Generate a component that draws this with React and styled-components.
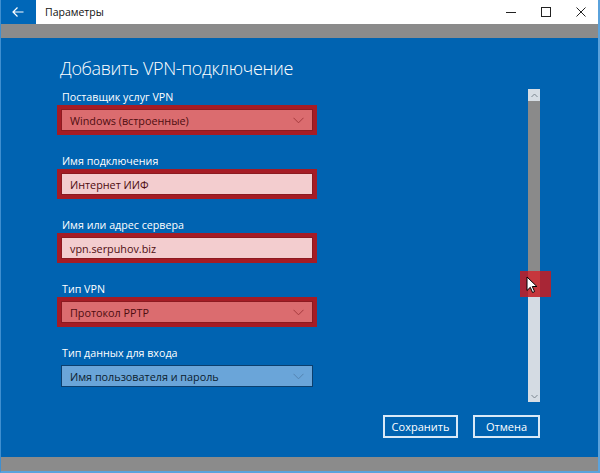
import React from "react";
import styled, { createGlobalStyle } from "styled-components";

const GlobalStyle = createGlobalStyle`
  html, body {
    margin: 0;
    padding: 0;
    background: #0063b1;
  }
  body {
    font-family: "Open Sans", "Noto Sans", sans-serif;
  }
`;

const Window = styled.div`
  width: 600px;
  height: 473px;
  box-sizing: border-box;
  display: flex;
  flex-direction: column;
  border-left: 1px solid #3f8fd0;
  border-right: 2px solid #5aa2dc;
  border-bottom: 2px solid #5aa2dc;
  background: #0063b1;
  overflow: hidden;
`;

const TitleBar = styled.div`
  height: 24px;
  display: flex;
  align-items: center;
  background: #ffffff;
  flex-shrink: 0;
`;

const BackButton = styled.div`
  width: 36px;
  height: 24px;
  margin-left: -1px;
  background: #0067b8;
  display: flex;
  align-items: center;
  justify-content: center;
`;

const Title = styled.div`
  flex: 1;
  padding-left: 9px;
  font-size: 10.5px;
  color: #111;
`;

const Controls = styled.div`
  display: flex;
  height: 24px;
`;

const CtrlButton = styled.div`
  width: 35px;
  height: 24px;
  display: flex;
  align-items: center;
  justify-content: center;
`;

const Strip = styled.div`
  height: ${(p) => p.h}px;
  background: #8b8b8b;
  flex-shrink: 0;
`;

const Main = styled.div`
  flex: 1;
  display: flex;
  flex-direction: column;
`;

const Body = styled.div`
  flex: 1;
  display: flex;
`;

const Form = styled.div`
  width: 260px;
  padding: 17px 0 0 56px;
`;

const Heading = styled.h1`
  margin: 0 0 8px 3px;
  white-space: nowrap;
  font-size: 18px;
  letter-spacing: -0.35px;
  line-height: 26px;
  font-weight: 300;
  color: #ffffff;
`;

const Field = styled.div`
  margin-bottom: 18px;
`;

const Label = styled.div`
  margin-left: 5px;
  font-size: 10.7px;
  line-height: 16px;
  color: #ffffff;
`;

const Ring = styled.div`
  height: 30px;
  box-sizing: border-box;
  padding: 4px;
  background: ${(p) => (p.marked ? "#a51c25" : "transparent")};
`;

const Box = styled.div`
  height: 100%;
  box-sizing: border-box;
  display: flex;
  align-items: center;
  justify-content: space-between;
  padding: 0 8px 0 8px;
  font-size: 10.8px;
  border: 1px solid ${(p) => p.border};
  background: ${(p) => p.fill};
  color: ${(p) => p.ink};
`;

const ScrollCol = styled.div`
  margin-left: 211px;
  padding-top: 51px;
  position: relative;
`;

const Track = styled.div`
  width: 12px;
  display: flex;
  flex-direction: column;
`;

const Arrow = styled.div`
  height: 12px;
  background: #d6dde4;
  display: flex;
  align-items: center;
  justify-content: center;
`;

const Segment = styled.div`
  height: ${(p) => p.h}px;
  background: ${(p) => p.bg};
`;

const Marker = styled.div`
  position: absolute;
  left: -8px;
  top: 233px;
  width: 31px;
  height: 26px;
  background: rgba(196, 28, 34, 0.86);
`;

const Cursor = styled.svg`
  position: absolute;
  left: 6px;
  top: 5px;
`;

const Footer = styled.div`
  display: flex;
  justify-content: flex-end;
  gap: 15px;
  padding: 0 58px 19px 0;
`;

const Button = styled.button`
  height: 23px;
  box-sizing: border-box;
  padding: 0;
  width: ${(p) => p.w}px;
  border: 2px solid #d9e9f7;
  background: #0063b1;
  color: #ffffff;
  font-family: "Open Sans", "Noto Sans", sans-serif;
  font-size: 11px;
`;

const Chevron = ({ color }) => (
  <svg width="11" height="7" viewBox="0 0 11 7">
    <polyline points="0.5,0.8 5.5,5.8 10.5,0.8" fill="none" stroke={color} strokeWidth="1" />
  </svg>
);

const ArrowGlyph = ({ up }) => (
  <svg width="7" height="5" viewBox="0 0 7 5">
    <polyline
      points={up ? "0.5,4 3.5,1 6.5,4" : "0.5,1 3.5,4 6.5,1"}
      fill="none"
      stroke="#7d8790"
      strokeWidth="1"
    />
  </svg>
);

const fields = [
  { label: "Поставщик услуг VPN", value: "Windows (встроенные)", kind: "select", marked: true },
  { label: "Имя подключения", value: "Интернет ИИФ", kind: "input", marked: true },
  { label: "Имя или адрес сервера", value: "vpn.serpuhov.biz", kind: "input", marked: true },
  { label: "Тип VPN", value: "Протокол PPTP", kind: "select", marked: true },
  { label: "Тип данных для входа", value: "Имя пользователя и пароль", kind: "select", marked: false },
];

const looks = {
  select: { fill: "#db6c6f", border: "#8c1a20", ink: "#4e0c10", chev: "#a53a3e" },
  input: { fill: "#f3cdcf", border: "#8c1a20", ink: "#4e0c10", chev: "" },
  plain: { fill: "#6aa5d9", border: "#0b3f6e", ink: "#0a1c2e", chev: "#5584b0" },
};

export default function App() {
  return (
    <Window>
      <GlobalStyle />
      <TitleBar>
        <BackButton>
          <svg width="12" height="10" viewBox="0 0 12 10">
            <path d="M11.5 5H1M5.5 0.5L1 5l4.5 4.5" fill="none" stroke="#fff" strokeWidth="1.2" />
          </svg>
        </BackButton>
        <Title>Параметры</Title>
        <Controls>
          <CtrlButton>
            <svg width="10" height="10" viewBox="0 0 10 10">
              <line x1="0" y1="5.5" x2="10" y2="5.5" stroke="#222" strokeWidth="1" />
            </svg>
          </CtrlButton>
          <CtrlButton>
            <svg width="10" height="10" viewBox="0 0 10 10">
              <rect x="0.5" y="0.5" width="9" height="9" fill="none" stroke="#222" strokeWidth="1" />
            </svg>
          </CtrlButton>
          <CtrlButton>
            <svg width="10" height="10" viewBox="0 0 10 10">
              <path d="M0.5 0.5l9 9M9.5 0.5l-9 9" stroke="#222" strokeWidth="1" />
            </svg>
          </CtrlButton>
        </Controls>
      </TitleBar>
      <Strip h={14} />
      <Main>
        <Body>
          <Form>
            <Heading>Добавить VPN-подключение</Heading>
            {fields.map((f) => {
              const look = f.marked ? looks[f.kind] : looks.plain;
              return (
                <Field key={f.label}>
                  <Label>{f.label}</Label>
                  <Ring marked={f.marked}>
                    <Box fill={look.fill} border={look.border} ink={look.ink}>
                      <span>{f.value}</span>
                      {f.kind === "select" && <Chevron color={look.chev} />}
                    </Box>
                  </Ring>
                </Field>
              );
            })}
          </Form>
          <ScrollCol>
            <Track>
              <Arrow>
                <ArrowGlyph up />
              </Arrow>
              <Segment h={170} bg="#8a8a8a" />
              <Segment h={119} bg="#d4dbe3" />
              <Arrow>
                <ArrowGlyph />
              </Arrow>
            </Track>
            <Marker>
              <Cursor width="12" height="18" viewBox="0 0 12 18">
                <path
                  d="M1 1v13.5l3.3-3.2 2.3 5.2 2-0.9-2.3-5.1h4.6z"
                  fill="#fff"
                  stroke="#000"
                  strokeWidth="1"
                  strokeLinejoin="round"
                />
              </Cursor>
            </Marker>
          </ScrollCol>
        </Body>
        <Footer>
          <Button w={75}>Сохранить</Button>
          <Button w={67}>Отмена</Button>
        </Footer>
      </Main>
      <Strip h={14} />
    </Window>
  );
}
